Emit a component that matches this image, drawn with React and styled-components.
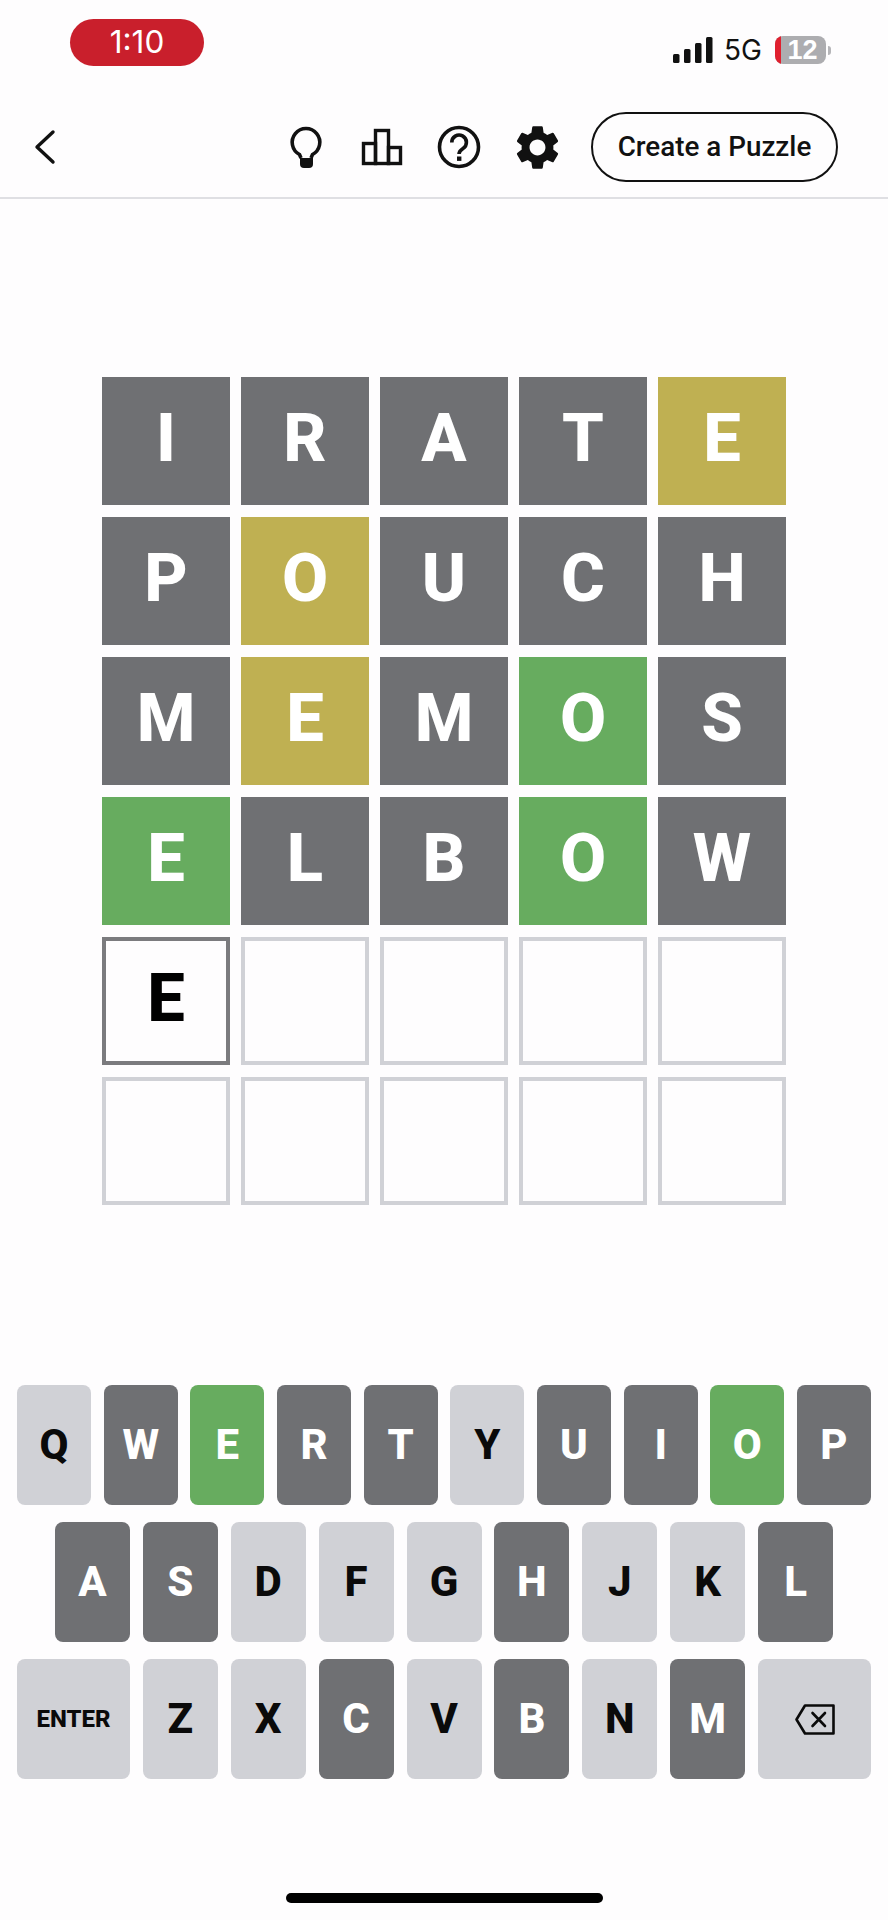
import React from "react";
import styled, { createGlobalStyle } from "styled-components";

const Global = createGlobalStyle`
  html, body { margin: 0; padding: 0; background: #fefdfe; }
  body { font-family: Roboto, "Liberation Sans", sans-serif; }
`;

const colors = {
  absent: "#6f7073",
  present: "#bfb052",
  correct: "#67ac5f",
  idle: "#d0d1d6",
};

const Page = styled.div`
  width: 888px;
  height: 1920px;
  background: #fefdfe;
  display: flex;
  flex-direction: column;
  overflow: hidden;
`;

const StatusBar = styled.div`
  height: 84px;
  box-sizing: border-box;
  padding: 19px 57px 0 70px;
  display: flex;
  justify-content: space-between;
  align-items: flex-start;
`;

const TimePill = styled.div`
  width: 134px;
  height: 47px;
  border-radius: 24px;
  background: #c91f2c;
  color: #fff;
  font: 400 31.5px/45px Inter, "Liberation Sans", sans-serif;
  text-align: center;
`;

const StatusRight = styled.div`
  height: 28px;
  margin-top: 17px;
  display: flex;
  align-items: center;
`;

const Network = styled.span`
  font: 400 28px/28px Inter, "Liberation Sans", sans-serif;
  color: #111;
  margin: 0 14px 0 11px;
  width: 37px;
  white-space: nowrap;
`;

const Battery = styled.div`
  width: 51px;
  height: 28px;
  border-radius: 8px;
  background: #adadb0;
  color: #fff;
  font: 700 27px/28px "Liberation Sans", sans-serif;
  text-align: center;
  padding-left: 4px;
  box-sizing: border-box;
  overflow: hidden;
  position: relative;
`;

const BatteryLow = styled.i`
  position: absolute;
  left: 0;
  top: 0;
  bottom: 0;
  width: 6px;
  background: #e0202f;
`;

const BatteryTip = styled.i`
  width: 3px;
  height: 9px;
  margin-left: 2px;
  border-radius: 0 3px 3px 0;
  background: #b5b5b8;
`;

const Nav = styled.header`
  height: 115px;
  box-sizing: border-box;
  padding: 13px 50px 0 33px;
  border-bottom: 2px solid #dfdfe3;
  display: flex;
  align-items: center;
`;

const BackButton = styled.div`
  display: flex;
  margin-right: auto;
`;

const IconSlot = styled.div`
  width: 77px;
  height: 54px;
  margin-left: ${(p) => p.$shift || 0}px;
  display: flex;
  align-items: center;
  justify-content: center;
`;

const CreateButton = styled.div`
  width: 247px;
  height: 70px;
  box-sizing: border-box;
  margin-left: 15px;
  border: 2px solid #111;
  border-radius: 35px;
  color: #111;
  font: 500 27.8px/66px Roboto, "Liberation Sans", sans-serif;
  text-align: center;
`;

const Board = styled.div`
  margin-top: 178px;
  display: grid;
  grid-template-columns: repeat(5, 128px);
  grid-auto-rows: 128px;
  column-gap: 11px;
  row-gap: 12px;
  justify-content: center;
`;

const Tile = styled.div`
  box-sizing: border-box;
  display: flex;
  align-items: center;
  justify-content: center;
  padding-bottom: 6px;
  font: 800 67px/1 Roboto, "Liberation Sans", sans-serif;
  color: ${(p) => (p.$state === "active" ? "#000" : "#fff")};
  background: ${(p) => colors[p.$state] || "transparent"};
  border: ${(p) =>
    p.$state === "active"
      ? "4px solid #7b7b7e"
      : p.$state === "empty"
      ? "4px solid #d0d1d6"
      : "none"};
`;

const Keyboard = styled.div`
  margin-top: 180px;
  padding: 0 17px;
  display: flex;
  flex-direction: column;
  gap: 17px;
`;

const KeyRow = styled.div`
  display: flex;
  justify-content: center;
  gap: ${(p) => p.$gap}px;
`;

const Key = styled.div`
  width: ${(p) => p.$w}px;
  height: 120px;
  flex: none;
  border-radius: 8px;
  display: flex;
  align-items: center;
  justify-content: center;
  background: ${(p) => colors[p.$state]};
  color: ${(p) => (p.$state === "idle" ? "#0a0a0a" : "#fff")};
  font: 800 ${(p) => (p.$small ? 24 : 42)}px/1 Roboto, "Liberation Sans", sans-serif;
`;

const HomeBar = styled.div`
  width: 317px;
  height: 10px;
  margin: 114px auto 0;
  border-radius: 5px;
  background: #000;
`;

const rows = [
  [["I", "absent"], ["R", "absent"], ["A", "absent"], ["T", "absent"], ["E", "present"]],
  [["P", "absent"], ["O", "present"], ["U", "absent"], ["C", "absent"], ["H", "absent"]],
  [["M", "absent"], ["E", "present"], ["M", "absent"], ["O", "correct"], ["S", "absent"]],
  [["E", "correct"], ["L", "absent"], ["B", "absent"], ["O", "correct"], ["W", "absent"]],
  [["E", "active"], ["", "empty"], ["", "empty"], ["", "empty"], ["", "empty"]],
  [["", "empty"], ["", "empty"], ["", "empty"], ["", "empty"], ["", "empty"]],
];

const absent = new Set("WRTUIPASHLCBM".split(""));
const correct = new Set(["E", "O"]);
const keyState = (k) => (correct.has(k) ? "correct" : absent.has(k) ? "absent" : "idle");

const Signal = () => (
  <svg width="40" height="26" viewBox="0 0 40 26">
    <g fill="#111">
      <rect x="0" y="17" width="6.5" height="9" rx="1.5" />
      <rect x="11" y="12" width="6.5" height="14" rx="1.5" />
      <rect x="22" y="6" width="6.5" height="20" rx="1.5" />
      <rect x="33" y="0" width="6.5" height="26" rx="1.5" />
    </g>
  </svg>
);

const Chevron = () => (
  <svg width="24" height="36" viewBox="0 0 24 36" fill="none" stroke="#111" strokeWidth="3.4" strokeLinecap="round" strokeLinejoin="round">
    <polyline points="20,3 4,18 20,33" />
  </svg>
);

const Bulb = () => (
  <svg width="48" height="48" viewBox="0 0 48 48">
    <path d="M20 35 L18.5 31.5 A13.8 13.8 0 1 1 31.5 31.5 L30 35" fill="none" stroke="#111" strokeWidth="3.6" />
    <path d="M19 35 H32 V41 Q32 45 28 45 H23 Q19 45 19 41 Z" fill="#111" />
  </svg>
);

const Stats = () => (
  <svg width="48" height="48" viewBox="0 0 48 48" fill="none" stroke="#111" strokeWidth="3.4">
    <rect x="17.5" y="7.5" width="13" height="33" />
    <rect x="5.5" y="20.5" width="12" height="20" />
    <rect x="30.5" y="24.5" width="12" height="16" />
  </svg>
);

const Help = () => (
  <svg width="48" height="48" viewBox="0 0 48 48" fill="none">
    <circle cx="24" cy="24" r="19.5" stroke="#111" strokeWidth="3.6" />
    <path d="M16.8 19.5 A7.3 7.3 0 1 1 28 25.5 C25 27.5 24 28.5 24 31" stroke="#111" strokeWidth="3.6" />
    <rect x="22" y="33.5" width="4.4" height="4.4" fill="#111" />
  </svg>
);

const Gear = () => (
  <svg width="53" height="53" viewBox="0 0 24 24" fill="#111">
    <path d="M19.14 12.94c.04-.3.06-.61.06-.94 0-.32-.02-.64-.07-.94l2.03-1.58c.18-.14.23-.41.12-.61l-1.92-3.32c-.12-.22-.37-.29-.59-.22l-2.39.96c-.5-.38-1.03-.7-1.62-.94l-.36-2.54c-.04-.24-.24-.41-.48-.41h-3.84c-.24 0-.43.17-.47.41l-.36 2.54c-.59.24-1.13.57-1.62.94l-2.39-.96c-.22-.08-.47 0-.59.22L2.74 8.87c-.12.21-.08.47.12.61l2.03 1.58c-.05.3-.09.63-.09.94s.02.64.07.94l-2.03 1.58c-.18.14-.23.41-.12.61l1.92 3.32c.12.22.37.29.59.22l2.39-.96c.5.38 1.03.7 1.62.94l.36 2.54c.05.24.24.41.48.41h3.84c.24 0 .44-.17.47-.41l.36-2.54c.59-.24 1.13-.56 1.62-.94l2.39.96c.22.08.47 0 .59-.22l1.92-3.32c.12-.22.07-.47-.12-.61l-2.01-1.58zM12 15.6c-1.98 0-3.6-1.62-3.6-3.6s1.62-3.6 3.6-3.6 3.6 1.62 3.6 3.6-1.62 3.6-3.6 3.6z" />
  </svg>
);

const Backspace = () => (
  <svg width="40" height="31" viewBox="0 0 40 31" fill="none" stroke="#0a0a0a" strokeWidth="2.6" strokeLinejoin="round" strokeLinecap="round">
    <path d="M1.5 15.5 L10 1.5 H38.5 V29.5 H10 Z" />
    <path d="M17.5 9 L30 22 M30 9 L17.5 22" />
  </svg>
);

export default function App() {
  return (
    <Page>
      <Global />
      <StatusBar>
        <TimePill>1:10</TimePill>
        <StatusRight>
          <Signal />
          <Network>5G</Network>
          <Battery>
            <BatteryLow />
            12
          </Battery>
          <BatteryTip />
        </StatusRight>
      </StatusBar>
      <Nav>
        <BackButton>
          <Chevron />
        </BackButton>
        <IconSlot><Bulb /></IconSlot>
        <IconSlot><Stats /></IconSlot>
        <IconSlot><Help /></IconSlot>
        <IconSlot $shift={2}><Gear /></IconSlot>
        <CreateButton>Create a Puzzle</CreateButton>
      </Nav>
      <Board>
        {rows.flat().map(([letter, state], i) => (
          <Tile key={i} $state={state}>{letter}</Tile>
        ))}
      </Board>
      <Keyboard>
        <KeyRow $gap={12.67}>
          {"QWERTYUIOP".split("").map((k) => (
            <Key key={k} $w={74} $state={keyState(k)}>{k}</Key>
          ))}
        </KeyRow>
        <KeyRow $gap={12.9}>
          {"ASDFGHJKL".split("").map((k) => (
            <Key key={k} $w={75} $state={keyState(k)}>{k}</Key>
          ))}
        </KeyRow>
        <KeyRow $gap={12.9}>
          <Key $w={113} $state="idle" $small>ENTER</Key>
          {"ZXCVBNM".split("").map((k) => (
            <Key key={k} $w={75} $state={keyState(k)}>{k}</Key>
          ))}
          <Key $w={113} $state="idle"><Backspace /></Key>
        </KeyRow>
      </Keyboard>
      <HomeBar />
    </Page>
  );
}
